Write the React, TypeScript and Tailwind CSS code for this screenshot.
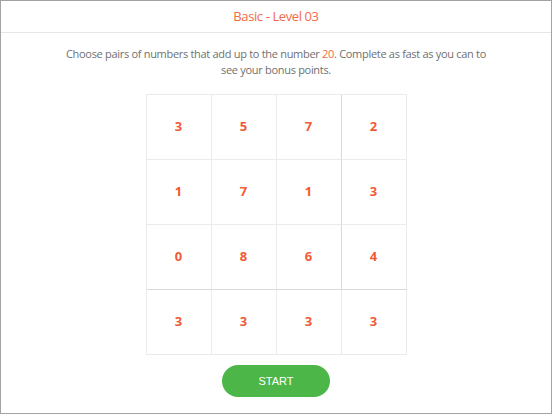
import React from 'react';

const rows: number[][] = [
  [3, 5, 7, 2],
  [1, 7, 1, 3],
  [0, 8, 6, 4],
  [3, 3, 3, 3],
];

const Cell: React.FC<{ value: number; row: number; col: number }> = ({ value, row, col }) => {
  // the seam between the 3rd/4th column and 3rd/4th row is drawn a bit darker
  const right = col === 2 && row < 3 ? 'border-r-[#d9d9d9]' : 'border-r-[#ebebeb]';
  const bottom = row === 2 ? 'border-b-[#d9d9d9]' : 'border-b-[#ebebeb]';
  return (
    <div
      className={`w-[65px] h-[65px] flex items-center justify-center border-r border-b ${right} ${bottom} text-[13px] font-bold text-[#f25a35]`}
    >
      {value}
    </div>
  );
};

export default function App() {
  return (
    <div
      className="w-[552px] h-[414px] border border-[#a3a3a3] bg-white flex flex-col items-center"
      style={{ fontFamily: '"Open Sans", "Noto Sans", sans-serif' }}
    >
      <div className="w-full h-[32px] flex-shrink-0 border-b border-[#e6e6e6] flex items-center justify-center">
        <h1 className="text-[13px] tracking-[-0.4px] text-[#f26a48]">Basic - Level 03</h1>
      </div>

      <p className="mt-[13px] w-[430px] text-center text-[11px] tracking-[-0.3px] leading-[16px] text-[#707070]">
        Choose pairs of numbers that add up to the number <span className="text-[#f26a48]">20</span>. Complete as fast as you can to see your bonus points.
      </p>

      <div className="mt-[16px] grid grid-cols-4 border-l border-t border-[#ebebeb]">
        {rows.map((r, ri) =>
          r.map((v, ci) => <Cell key={`${ri}-${ci}`} value={v} row={ri} col={ci} />)
        )}
      </div>

      <button
        className="mt-[10px] w-[108px] h-[32px] rounded-full bg-[#4cb748] text-white text-[11px]"
        style={{ fontFamily: '"Liberation Sans", Arial, sans-serif' }}
      >
        START
      </button>
    </div>
  );
}
